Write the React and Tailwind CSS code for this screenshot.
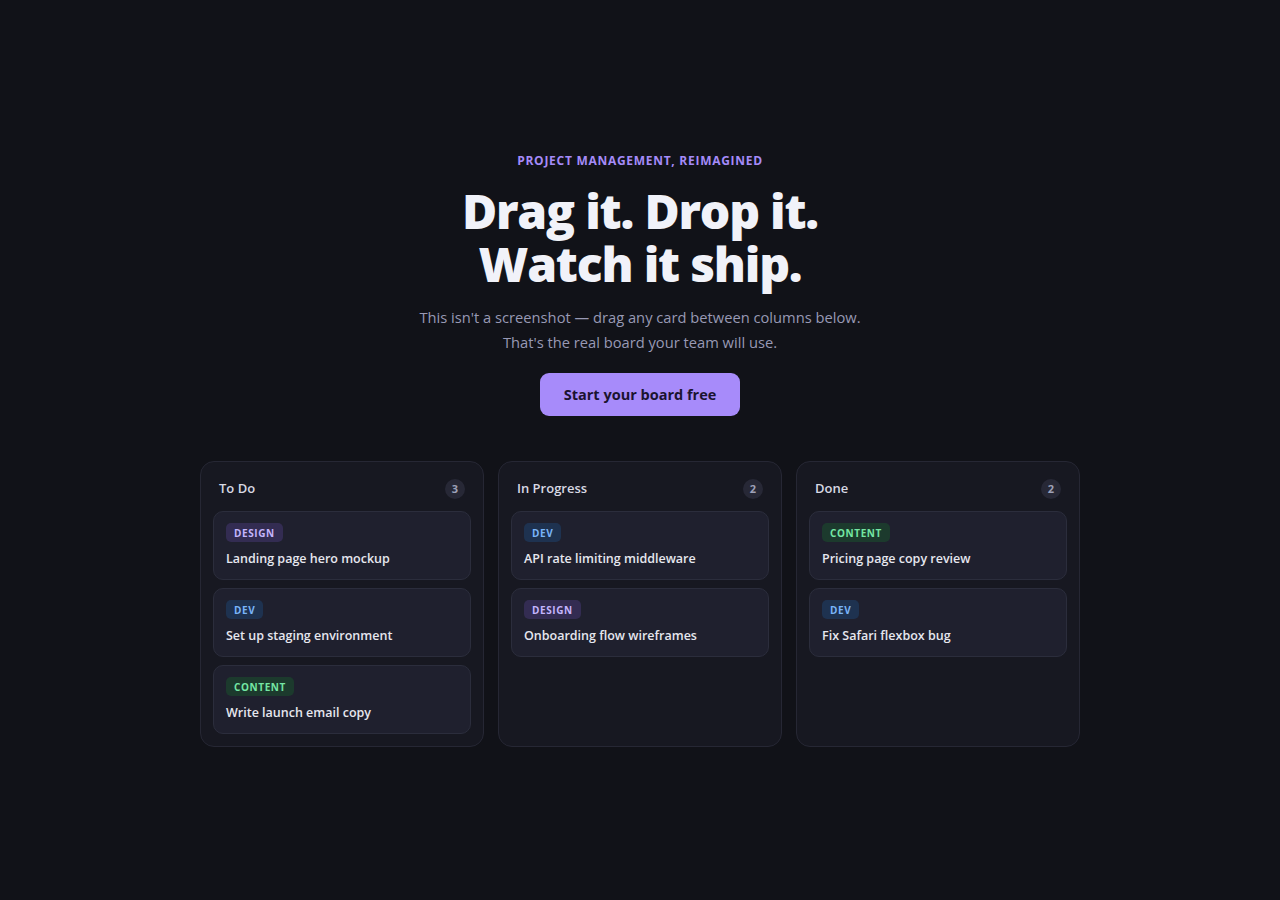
import React from "react";

const TAGS = {
  DESIGN: "bg-[#332c52] text-[#c4b5fd]",
  DEV: "bg-[#1e3250] text-[#7ab4f8]",
  CONTENT: "bg-[#1c3a2d] text-[#74e6a4]",
};

const columns = [
  {
    title: "To Do",
    cards: [
      { tag: "DESIGN", title: "Landing page hero mockup" },
      { tag: "DEV", title: "Set up staging environment" },
      { tag: "CONTENT", title: "Write launch email copy" },
    ],
  },
  {
    title: "In Progress",
    cards: [
      { tag: "DEV", title: "API rate limiting middleware" },
      { tag: "DESIGN", title: "Onboarding flow wireframes" },
    ],
  },
  {
    title: "Done",
    cards: [
      { tag: "CONTENT", title: "Pricing page copy review" },
      { tag: "DEV", title: "Fix Safari flexbox bug" },
    ],
  },
];

function Card({ tag, title }) {
  return (
    <div className="flex flex-col items-start rounded-[10px] border border-[#2b2d3c] bg-[#1f202e] px-3 pt-[11px] pb-3">
      <div
        className={`flex h-[19px] items-center rounded-[5px] px-2 text-[10px] font-bold leading-none tracking-[0.06em] ${TAGS[tag]}`}
      >
        {tag}
      </div>
      <div className="mt-[9px] h-4 text-[12.5px] font-semibold leading-4 text-[#e6e7ef]">{title}</div>
    </div>
  );
}

function Column({ title, cards }) {
  return (
    <div className="h-[286px] rounded-[14px] border border-[#262734] bg-[#171821] px-3 pt-[13px] pb-3">
      <div className="mb-2 flex h-7 items-center justify-between px-1.5">
        <span className="text-[13px] font-semibold text-[#d8d9e4]">{title}</span>
        <span className="flex h-5 w-5 items-center justify-center rounded-full bg-[#272836] text-[11px] font-bold text-[#9ea1b8]">
          {cards.length}
        </span>
      </div>
      <div className="flex flex-col gap-2">
        {cards.map((c) => (
          <Card key={c.title} {...c} />
        ))}
      </div>
    </div>
  );
}

export default function App() {
  return (
    <div
      className="min-h-[900px] bg-[#111218] pt-[153px]"
      style={{ fontFamily: '"Open Sans", "Noto Sans", sans-serif' }}
    >
      <div className="flex flex-col items-center text-center">
        <div className="text-[12px] font-bold uppercase leading-4 tracking-[0.06em] text-[#a58bf8]">
          Project management, reimagined
        </div>
        <h1 className="mt-[15px] text-[48px] font-extrabold leading-[53px] tracking-[-0.025em] text-[#f1f2f9]">
          Drag it. Drop it.
          <br />
          Watch it ship.
        </h1>
        <p className="mt-[15px] text-[14.7px] leading-[25px] text-[#9899b4]">
          This isn't a screenshot — drag any card between columns below.
          <br />
          That's the real board your team will use.
        </p>
        <button className="mt-[18px] h-[43px] w-[200px] rounded-[9px] bg-[#a78bfa] text-[14.5px] font-bold text-[#1b1330]">
          Start your board free
        </button>
      </div>
      <div className="mx-auto mt-[45px] grid w-[880px] grid-cols-3 gap-[14px]">
        {columns.map((col) => (
          <Column key={col.title} {...col} />
        ))}
      </div>
    </div>
  );
}
